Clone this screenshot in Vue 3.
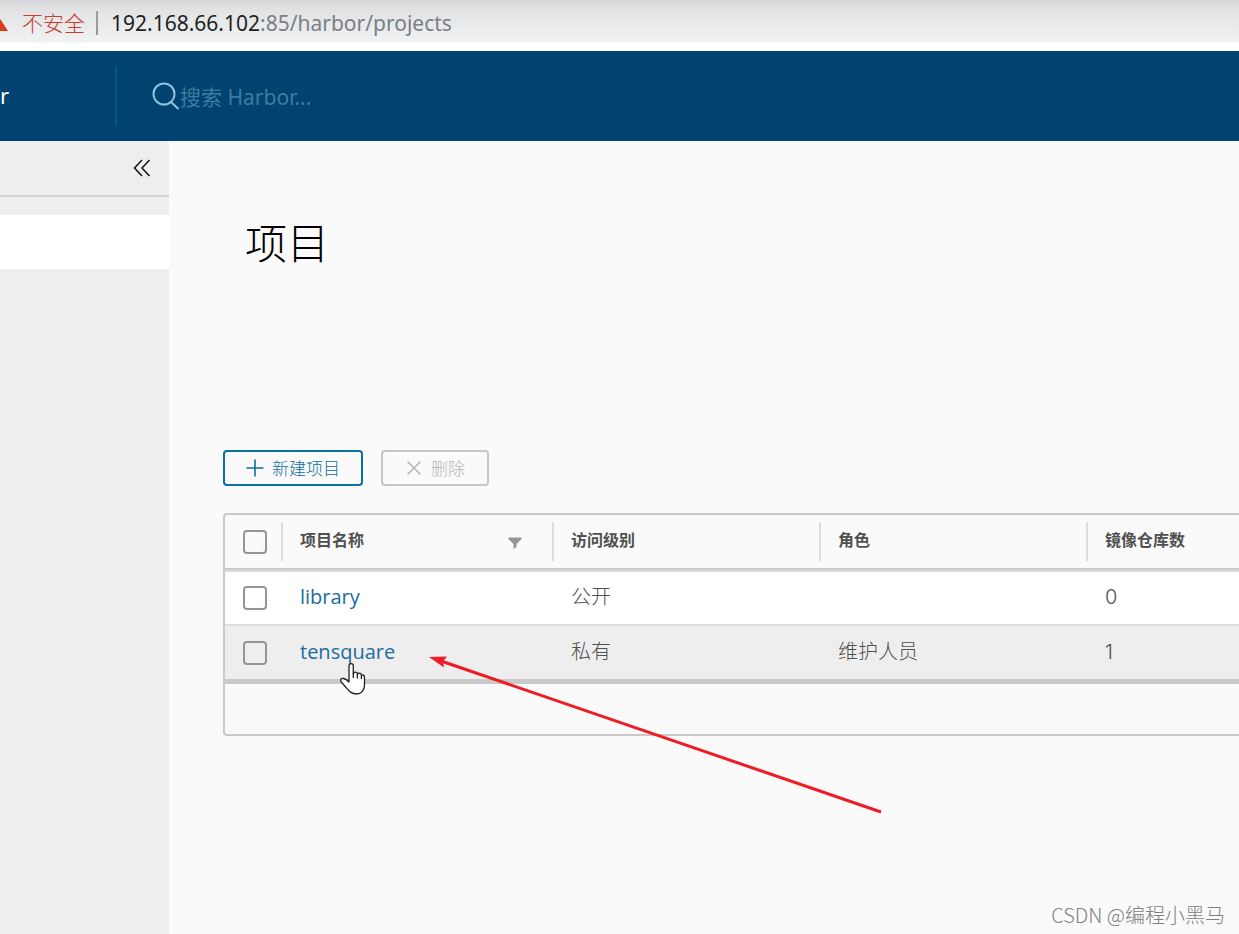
<script setup>
import { ref } from 'vue'

const keyword = ref('')
const columns = ['访问级别', '角色', '镜像仓库数']
const projects = [
  { name: 'library', access: '公开', role: '', repos: 0, active: false },
  { name: 'tensquare', access: '私有', role: '维护人员', repos: 1, active: true },
]
</script>

<template>
  <div class="page">
    <div class="address-bar">
      <svg class="warn" width="8" height="20" viewBox="0 0 8 20" aria-hidden="true">
        <path d="M-3 1 L8 18 H-12 Z" fill="#d93a20" />
      </svg>
      <button class="insecure" type="button">不安全</button>
      <span class="address"><span class="host">192.168.66.102</span>:85/harbor/projects</span>
    </div>

    <header class="navbar">
      <a class="brand" href="#">r</a>
      <label class="search">
        <svg width="28" height="28" viewBox="0 0 28 28" fill="none" stroke="#8fc3dd" stroke-width="2" aria-hidden="true">
          <circle cx="12" cy="12" r="10.5" />
          <path d="M19.5 20.5 L26.5 27" />
        </svg>
        <input v-model="keyword" type="text" placeholder="搜索 Harbor..." aria-label="搜索 Harbor" />
      </label>
    </header>

    <div class="body">
      <nav class="sidebar">
        <div class="collapse">
          <button type="button" aria-label="折叠">
            <svg width="18" height="18" viewBox="0 0 18 18" fill="none" stroke="#111" stroke-width="1.5" aria-hidden="true">
              <path d="M9 1 L1.500 9 L9 17 M16.500 1 L9 9 L16.500 17" />
            </svg>
          </button>
        </div>
        <a class="nav-item" href="#" aria-label="项目"></a>
      </nav>

      <main class="content">
        <h1>项目</h1>
        <div class="actions">
          <button class="btn primary" type="button">
            <svg width="18" height="18" viewBox="0 0 18 18" stroke="currentColor" stroke-width="1.6" aria-hidden="true">
              <path d="M9 0.500 V17.500 M0.500 9 H17.500" />
            </svg>
            <span>新建项目</span>
          </button>
          <button class="btn" type="button" disabled>
            <svg width="18" height="18" viewBox="0 0 18 18" stroke="currentColor" stroke-width="1.5" aria-hidden="true">
              <path d="M2.500 2.500 L15.500 15.500 M15.500 2.500 L2.500 15.500" />
            </svg>
            <span>删除</span>
          </button>
        </div>

        <div class="datagrid">
          <table>
            <colgroup>
              <col class="c-check" />
              <col class="c-name" />
              <col class="c-mid" />
              <col class="c-mid" />
              <col />
            </colgroup>
            <thead>
              <tr>
                <th class="check"><input type="checkbox" aria-label="全选" /></th>
                <th>
                  <div class="head">
                    项目名称
                    <button class="filter" type="button" aria-label="筛选">
                      <svg width="14" height="12" viewBox="0 0 14 12" fill="#949494" aria-hidden="true">
                        <path d="M0.500 0.500 H13.500 V2 L8.500 7 V10 L5.500 12 V7 L0.500 2 Z" />
                      </svg>
                    </button>
                  </div>
                </th>
                <th v-for="c in columns" :key="c"><div class="head">{{ c }}</div></th>
              </tr>
            </thead>
            <tbody>
              <tr v-for="p in projects" :key="p.name" :class="{ active: p.active }">
                <td class="check"><input type="checkbox" :aria-label="p.name" /></td>
                <td><a href="#">{{ p.name }}</a></td>
                <td>{{ p.access }}</td>
                <td>{{ p.role }}</td>
                <td class="count">{{ p.repos }}</td>
              </tr>
            </tbody>
          </table>
          <div class="grid-footer"></div>
        </div>
      </main>
    </div>

    <svg class="cursor" width="28" height="34" viewBox="0 0 28 34" aria-hidden="true">
      <path
        d="M9 4 C9 0.800 13.300 0.800 13.300 4 V12 C14.500 9.300 17.400 9.800 17.400 12.300 C18.800 10.300 21.400 11 21.400 13.500 C23 12.300 24.500 13 24.500 15.500 V23 C24.500 28 21.500 32 16.500 32 C11.500 32 9 29 6 25.500 L1 19.500 C-0.200 17.500 1.500 16 3.500 16.500 C5.500 17 7.300 18 9 20 Z"
        fill="#fff" stroke="#222" stroke-width="1.300" stroke-linejoin="round" />
      <path d="M13.300 11 V16 M17.400 12 V16.500 M21.400 13.500 V17" fill="none" stroke="#222" stroke-width="1.300" />
    </svg>
    <svg class="arrow" width="454" height="160" viewBox="0 0 454 160" aria-hidden="true">
      <path d="M12 5 L452 156" stroke="#ee1c25" stroke-width="3" />
      <path d="M0 1 L18 0.500 L14 5.500 L15 11.500 Z" fill="#ee1c25" />
    </svg>
    <div class="watermark">CSDN @编程小黑马</div>
  </div>
</template>

<style>
body {
  background: #fafafa;
}
</style>

<style scoped>
.page {
  position: relative;
  display: flex;
  flex-direction: column;
  min-height: 100vh;
  overflow: hidden;
  background: #fafafa;
  color: #505050;
  font-family: "Noto Sans", "Noto Sans CJK SC", sans-serif;
}
button,
input {
  margin: 0;
  font-family: inherit;
}
.address-bar {
  box-sizing: border-box;
  display: flex;
  align-items: center;
  height: 51px;
  padding-bottom: 6px;
  background: linear-gradient(#d5d6d8, #dfe1e3 8px, #f1f2f3 42px, #fff 43px);
  font-size: 21px;
}
.insecure {
  padding: 0 11px 2px 14px;
  border: 0;
  background: none;
  color: #cc3a2e;
  font-size: 21px;
  font-weight: 300;
  line-height: 24px;
  font-family: "Noto Sans CJK SC", sans-serif;
}
.address {
  padding-left: 13px;
  border-left: 2px solid #9a9c9e;
  line-height: 24px;
  color: #7c8084;
  white-space: nowrap;
}
.host {
  color: #1d1f21;
}
.navbar {
  display: flex;
  align-items: center;
  height: 90px;
  background: #004270;
}
.brand {
  box-sizing: border-box;
  width: 117px;
  height: 60px;
  border-right: 2px solid #0a5682;
  color: #fff;
  font-size: 22px;
  line-height: 58px;
  text-decoration: none;
}
.search {
  display: flex;
  flex: 1;
  align-items: center;
  padding-left: 35px;
}
.search input {
  flex: 1;
  padding: 2px 0 0;
  border: 0;
  outline: 0;
  background: none;
  color: #fff;
  font-size: 21px;
}
.search input::placeholder {
  color: #3d7ca1;
  opacity: 1;
}
.body {
  display: flex;
  flex: 1;
}
.sidebar {
  width: 169px;
  background: #eee;
}
.collapse {
  display: flex;
  justify-content: flex-end;
  height: 54px;
  padding-right: 18px;
  border-bottom: 2px solid #d2d2d2;
}
.collapse button {
  display: flex;
  align-items: center;
  padding: 0;
  border: 0;
  background: none;
}
.nav-item {
  display: block;
  height: 54px;
  margin-top: 18px;
  background: #fff;
}
.content {
  flex: 1;
  min-width: 0;
  padding: 72px 0 0 54px;
}
h1 {
  margin: 0 0 177px 22px;
  color: #000;
  font-size: 42px;
  font-weight: 300;
  line-height: 60px;
}
.actions {
  display: flex;
  gap: 18px;
  margin-bottom: 27px;
}
.btn {
  box-sizing: border-box;
  display: flex;
  align-items: center;
  gap: 8px;
  height: 36px;
  padding: 0 21px;
  border: 2px solid #c6c6c6;
  border-radius: 4px;
  background: transparent;
  color: #b4b4b4;
  font-size: 17px;
  font-weight: 300;
}
.btn:disabled {
  padding: 0 22px;
}
.btn span {
  padding-bottom: 2px;
}
.btn.primary {
  border-color: #0b6f9f;
  color: #0b6f9f;
}
.datagrid {
  border: 2px solid #c9c9c9;
  border-right: 0;
  border-radius: 4px 0 0 4px;
}
table {
  width: 100%;
  table-layout: fixed;
  border-collapse: separate;
  border-spacing: 0;
}
.c-check {
  width: 56px;
}
.c-name {
  width: 271px;
}
.c-mid {
  width: 267px;
}
th {
  height: 53px;
  padding: 0;
  border-bottom: 2px solid #cbcbcb;
  text-align: left;
}
.head {
  display: flex;
  align-items: center;
  justify-content: space-between;
  height: 35px;
  padding: 0 30px 4px 17px;
  border-left: 2px solid #ddd;
  font-size: 16px;
  font-weight: 700;
  line-height: 24px;
}
.filter {
  display: flex;
  padding: 6px 0 0;
  border: 0;
  background: none;
}
td {
  box-sizing: border-box;
  height: 54px;
  padding: 0 0 2px 19px;
  border-top: 2px solid #dcdcdc;
  background: #fff;
  font-size: 20px;
  font-weight: 300;
  line-height: 28px;
}
.active td {
  height: 60px;
  border-bottom: 5px solid #c9c9c9;
  background: #eee;
}
td a {
  color: #1c6ca0;
  font-family: "Open Sans", sans-serif;
  font-weight: 400;
  text-decoration: none;
}
td.count {
  font-family: Inter, sans-serif;
}
.check,
td.check {
  padding: 0 0 0 18px;
  line-height: 0;
}
.check input {
  appearance: none;
  box-sizing: border-box;
  width: 24px;
  height: 24px;
  border: 2px solid #959595;
  border-radius: 4px;
  background: transparent;
  vertical-align: middle;
}
.grid-footer {
  height: 50px;
}
.cursor {
  position: absolute;
  top: 662px;
  left: 340px;
}
.arrow {
  position: absolute;
  top: 656px;
  left: 429px;
}
.watermark {
  position: absolute;
  right: 14px;
  bottom: 5px;
  color: #808080;
  font-family: "Noto Sans CJK SC", sans-serif;
  font-size: 20px;
  font-weight: 300;
  line-height: 28px;
}
</style>
